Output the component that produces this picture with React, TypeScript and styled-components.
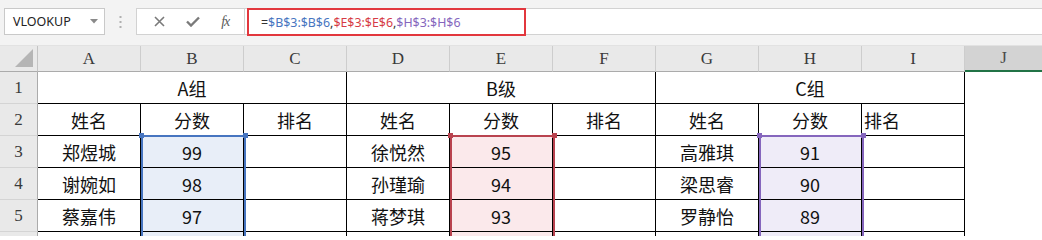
import React from 'react';
import styled, { createGlobalStyle, css } from 'styled-components';

type Tone = 'blue' | 'red' | 'purple';

const tones: Record<Tone, { fill: string; line: string }> = {
  blue: { fill: '#e8eef8', line: '#4775c0' },
  red: { fill: '#fbe9eb', line: '#b9434f' },
  purple: { fill: '#efecf8', line: '#8566bd' },
};

const GlobalStyle = createGlobalStyle`
  html, body {
    margin: 0;
    padding: 0;
    background: #ffffff;
    overflow: hidden;
  }
`;

const Sheet = styled.div`
  width: 1042px;
  height: 236px;
  overflow: hidden;
  display: flex;
  flex-direction: column;
  background: #ffffff;
`;

const Toolbar = styled.div`
  flex: none;
  height: 46px;
  box-sizing: border-box;
  padding: 8px 0 10px 4px;
  display: flex;
  background: #f3f3f3;
  border-bottom: 1px solid #e2e2e2;
`;

const NameBox = styled.div`
  width: 101px;
  box-sizing: border-box;
  display: flex;
  align-items: center;
  justify-content: space-between;
  padding: 0 6px 0 8px;
  background: #ffffff;
  border: 1px solid #c9c9c9;
  font-family: 'Noto Sans', 'Liberation Sans', sans-serif;
  font-size: 12.5px;
  color: #222222;
`;

const Grip = styled.div`
  width: 31px;
  display: flex;
  align-items: center;
  justify-content: center;
`;

const FormulaBar = styled.div`
  flex: 1;
  display: flex;
  background: #ffffff;
  border-top: 1px solid #d2d2d2;
  border-bottom: 1px solid #d2d2d2;
  border-left: 1px solid #d2d2d2;
`;

const FxGroup = styled.div`
  width: 108px;
  display: flex;
  align-items: center;
  justify-content: space-around;
  padding: 0 4px 0 6px;
  box-sizing: border-box;
  border-right: 1px solid #d2d2d2;
`;

const FxLabel = styled.span`
  font-family: 'Liberation Serif', 'DejaVu Serif', serif;
  font-style: italic;
  font-size: 14px;
  color: #5a5a5a;
  letter-spacing: -1px;
`;

const FormulaFrame = styled.div`
  width: 279px;
  margin: -1px 0 -2px 2px;
  box-sizing: border-box;
  border: 2px solid #e2373d;
  display: flex;
  align-items: center;
  padding-left: 12px;
  font-family: 'Noto Sans', 'Liberation Sans', sans-serif;
  font-size: 12.4px;
  color: #333333;
`;

const Ref = styled.span<{ $tone: Tone }>`
  color: ${(p) => tones[p.$tone].line};
  ${(p) =>
    p.$tone === 'red' &&
    css`
      color: #d63b45;
    `}
`;

const Grid = styled.div`
  display: grid;
  grid-template-columns: 38px repeat(9, 103px) 1fr;
`;

const HeaderRow = styled(Grid)`
  flex: none;
  height: 26px;
  background: #e9e9e9;
`;

const Corner = styled.div`
  display: flex;
  align-items: flex-end;
  justify-content: flex-end;
  padding: 0 4px 4px 0;
  border-right: 1px solid #c4c4c4;
  border-bottom: 1px solid #ababab;
`;

const ColHead = styled.div<{ $active?: boolean }>`
  display: flex;
  align-items: center;
  justify-content: center;
  box-sizing: border-box;
  font-family: 'Liberation Serif', 'DejaVu Serif', serif;
  font-size: 17px;
  color: #3a3a3a;
  border-right: 1px solid #cdcdcd;
  border-bottom: 1px solid #ababab;
  ${(p) =>
    p.$active &&
    css`
      background: #d3d3d3;
      border-right: none;
      border-bottom: 2px solid #217346;
      color: #4a4a4a;
    `}
`;

const Body = styled(Grid)`
  grid-auto-rows: 32px;
`;

const RowHead = styled.div`
  display: flex;
  align-items: center;
  justify-content: center;
  background: #e9e9e9;
  font-family: 'Liberation Serif', 'DejaVu Serif', serif;
  font-size: 17px;
  color: #3a3a3a;
  border-right: 1px solid #ababab;
  border-bottom: 1px solid #d4d4d4;
`;

const Cell = styled.div<{ $span?: number; $left?: boolean; $bare?: boolean; $tone?: Tone; $first?: boolean }>`
  grid-column: span ${(p) => p.$span ?? 1};
  display: flex;
  align-items: center;
  justify-content: ${(p) => (p.$left ? 'flex-start' : 'center')};
  padding-left: ${(p) => (p.$left ? '2px' : '0')};
  box-sizing: border-box;
  font-family: 'Noto Sans CJK SC', 'Noto Sans', sans-serif;
  font-size: 18px;
  color: #111111;
  border-right: ${(p) => (p.$bare ? 'none' : '1px solid #000000')};
  border-bottom: ${(p) => (p.$bare ? 'none' : '1px solid #000000')};
  ${(p) =>
    p.$tone &&
    css`
      position: relative;
      background: ${tones[p.$tone].fill};
      &::before {
        content: '';
        position: absolute;
        z-index: 1;
        top: -1px;
        bottom: -1px;
        left: 0;
        right: -3px;
        border-left: 2px solid ${tones[p.$tone].line};
        border-right: 2px solid ${tones[p.$tone].line};
        border-top: ${p.$first ? `2px solid ${tones[p.$tone].line}` : 'none'};
      }
    `}
  ${(p) =>
    p.$tone &&
    p.$first &&
    css`
      &::after {
        content: '';
        position: absolute;
        z-index: 2;
        top: -3px;
        left: -2px;
        width: 5px;
        height: 5px;
        background: ${tones[p.$tone!].line};
        box-shadow: 104px 0 0 ${tones[p.$tone!].line};
      }
    `}
`;

const groups: { title: string; tone: Tone; rows: [string, string][] }[] = [
  { title: 'A组', tone: 'blue', rows: [['郑煜城', '99'], ['谢婉如', '98'], ['蔡嘉伟', '97'], ['', '']] },
  { title: 'B级', tone: 'red', rows: [['徐悦然', '95'], ['孙瑾瑜', '94'], ['蒋梦琪', '93'], ['', '']] },
  { title: 'C组', tone: 'purple', rows: [['高雅琪', '91'], ['梁思睿', '90'], ['罗静怡', '89'], ['', '']] },
];

const columns = ['A', 'B', 'C', 'D', 'E', 'F', 'G', 'H', 'I'];

export default function App() {
  return (
    <Sheet>
      <GlobalStyle />
      <Toolbar>
        <NameBox>
          VLOOKUP
          <svg width="8" height="5" viewBox="0 0 8 5">
            <path d="M0 0h8L4 4.5z" fill="#8a8a8a" />
          </svg>
        </NameBox>
        <Grip>
          <svg width="3" height="12" viewBox="0 0 3 12">
            <rect x="0.5" y="0" width="2" height="2" fill="#b0b0b0" />
            <rect x="0.5" y="5" width="2" height="2" fill="#b0b0b0" />
            <rect x="0.5" y="10" width="2" height="2" fill="#b0b0b0" />
          </svg>
        </Grip>
        <FormulaBar>
          <FxGroup>
            <svg width="11" height="11" viewBox="0 0 11 11">
              <path d="M1 1l9 9M10 1l-9 9" stroke="#7a7a7a" strokeWidth="1.6" />
            </svg>
            <svg width="14" height="11" viewBox="0 0 14 11">
              <path d="M1 5.5l4 4L13 1.5" stroke="#7a7a7a" strokeWidth="2.4" fill="none" />
            </svg>
            <FxLabel>fx</FxLabel>
          </FxGroup>
          <FormulaFrame>
            =<Ref $tone="blue">$B$3:$B$6</Ref>,<Ref $tone="red">$E$3:$E$6</Ref>,<Ref $tone="purple">$H$3:$H$6</Ref>
          </FormulaFrame>
        </FormulaBar>
      </Toolbar>

      <HeaderRow>
        <Corner>
          <svg width="18" height="18" viewBox="0 0 18 18">
            <path d="M18 0V18H0z" fill="#b5b5b5" />
          </svg>
        </Corner>
        {columns.map((c) => (
          <ColHead key={c}>{c}</ColHead>
        ))}
        <ColHead $active>J</ColHead>
      </HeaderRow>

      <Body>
        <RowHead>1</RowHead>
        {groups.map((g) => (
          <Cell key={g.title} $span={3}>
            {g.title}
          </Cell>
        ))}
        <Cell $bare />

        <RowHead>2</RowHead>
        {groups.map((g, gi) => (
          <React.Fragment key={g.title}>
            <Cell>姓名</Cell>
            <Cell>分数</Cell>
            <Cell $left={gi === 2}>排名</Cell>
          </React.Fragment>
        ))}
        <Cell $bare />

        {[0, 1, 2, 3].map((r) => (
          <React.Fragment key={r}>
            {/* row 6 is only a sliver at the bottom edge, its number is out of view */}
            <RowHead>{r < 3 ? r + 3 : ''}</RowHead>
            {groups.map((g) => (
              <React.Fragment key={g.title}>
                <Cell>{g.rows[r][0]}</Cell>
                <Cell $tone={g.tone} $first={r === 0}>
                  {g.rows[r][1]}
                </Cell>
                <Cell />
              </React.Fragment>
            ))}
            <Cell $bare />
          </React.Fragment>
        ))}
      </Body>
    </Sheet>
  );
}
